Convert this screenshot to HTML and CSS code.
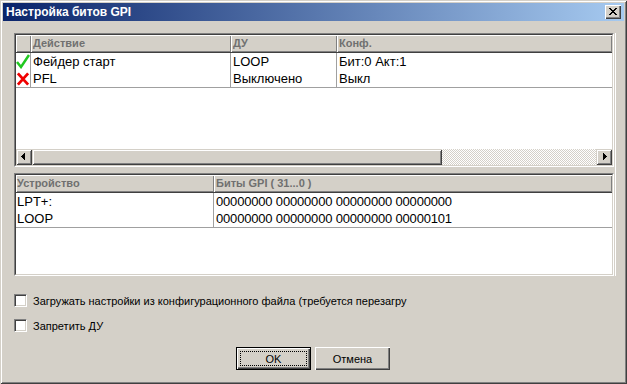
FILE: index.html
```html
<!DOCTYPE html>
<html>
<head>
  <meta charset="utf-8">
  <link rel="stylesheet" href="styles.css">
</head>
<body>
  <div class="window">
    <div class="titlebar">
      <span class="title">Настройка битов GPI</span>
      <button class="close" title="Закрыть">
        <svg viewBox="0 0 8 7" width="8" height="7">
          <path d="M0 0h2v1H0zM6 0h2v1H6zM1 1h2v1H1zM5 1h2v1H5zM2 2h4v1H2zM3 3h2v1H3zM2 4h4v1H2zM1 5h2v1H1zM5 5h2v1H5zM0 6h2v1H0zM6 6h2v1H6z"/>
        </svg>
      </button>
    </div>

    <div class="content">
      <div class="panel">
        <div class="list list-actions">
          <div class="list-in">
            <div class="grid cols-actions head">
              <div class="hc"></div>
              <div class="hc">Действие</div>
              <div class="hc">ДУ</div>
              <div class="hc">Конф.</div>
            </div>
            <div class="rows">
              <div class="grid cols-actions row">
                <div class="cell icon">
                  <svg viewBox="0 0 14 15" width="14" height="15">
                    <polyline points="1,8 5,13 13,1" class="ok-mark"/>
                  </svg>
                </div>
                <div class="cell">Фейдер старт</div>
                <div class="cell">LOOP</div>
                <div class="cell">Бит:0 Акт:1</div>
              </div>
              <div class="grid cols-actions row">
                <div class="cell icon">
                  <svg viewBox="0 0 15 16" width="15" height="16">
                    <path d="M2,2 L13,14 M13,2 L2,14" class="no-mark"/>
                  </svg>
                </div>
                <div class="cell">PFL</div>
                <div class="cell">Выключено</div>
                <div class="cell">Выкл</div>
              </div>
            </div>
            <div class="spacer"></div>
            <div class="hscroll">
              <div class="sb-btn">
                <svg viewBox="0 0 16 16" width="16" height="16">
                  <path d="M5 7h1v1H5zM6 6h1v3H6zM7 5h1v5H7zM8 4h1v7H8z"/>
                </svg>
              </div>
              <div class="sb-thumb"></div>
              <div class="sb-track"></div>
              <div class="sb-btn">
                <svg viewBox="0 0 16 16" width="16" height="16">
                  <path d="M10 7h1v1h-1zM9 6h1v3H9zM8 5h1v5H8zM7 4h1v7H7z"/>
                </svg>
              </div>
            </div>
          </div>
        </div>

        <div class="list list-devices">
          <div class="list-in">
            <div class="grid cols-devices head">
              <div class="hc">Устройство</div>
              <div class="hc">Биты GPI ( 31...0 )</div>
            </div>
            <div class="rows">
              <div class="grid cols-devices row">
                <div class="cell">LPT+:</div>
                <div class="cell bits">00000000 00000000 00000000 00000000</div>
              </div>
              <div class="grid cols-devices row">
                <div class="cell">LOOP</div>
                <div class="cell bits">00000000 00000000 00000000 00000101</div>
              </div>
            </div>
          </div>
        </div>
      </div>

      <label class="check first">
        <span class="box"></span>
        <span class="label-text">Загружать настройки из конфигурационного файла (требуется перезагру</span>
      </label>
      <label class="check">
        <span class="box"></span>
        <span class="label-text">Запретить ДУ</span>
      </label>

      <div class="buttons">
        <button class="btn default"><span class="focus">OK</span></button>
        <button class="btn">Отмена</button>
      </div>
    </div>
  </div>
</body>
</html>
```

FILE: styles.css
```css
body {
  margin: 0;
  padding: 0;
  font-family: "Liberation Sans", Arial, sans-serif;
  color: #000;
  background: #d4d0c8;
}

.window {
  width: 627px;
  height: 384px;
  box-sizing: border-box;
  padding: 3px;
  background: #d4d0c8;
  box-shadow: inset 1px 1px #d4d0c8, inset -1px -1px #404040, inset 2px 2px #fff, inset -2px -2px #808080;
  display: flex;
  flex-direction: column;
}

.titlebar {
  height: 18px;
  display: flex;
  align-items: center;
  justify-content: space-between;
  padding: 0 3px 0 3px;
  background: linear-gradient(to right, #0a246a, #a6caf0);
}

.title {
  color: #fff;
  font-weight: bold;
  font-size: 12px;
}

.close {
  width: 16px;
  height: 14px;
  padding: 0;
  border: none;
  background: #d4d0c8;
  box-shadow: inset 1px 1px #fff, inset -1px -1px #404040, inset -2px -2px #808080;
  display: flex;
  align-items: center;
  justify-content: center;
}

.close svg {
  fill: #000;
  shape-rendering: crispEdges;
  margin-top: -1px;
}

.content {
  flex: 1;
  padding: 12px 8px 0 11px;
  display: flex;
  flex-direction: column;
}

.panel {
  width: 602px;
  box-sizing: border-box;
  padding-right: 1px;
  border-right: 1px solid #fff;
  display: flex;
  flex-direction: column;
  gap: 6px;
}

.list {
  border: 1px solid;
  border-color: #808080 #fff #fff #808080;
}

.list-in {
  height: 100%;
  box-sizing: border-box;
  border: 1px solid;
  border-color: #404040 #d4d0c8 #d4d0c8 #404040;
  background: #fff;
  display: flex;
  flex-direction: column;
}

.list-actions {
  height: 134px;
  box-sizing: border-box;
}

.list-devices {
  height: 103px;
  box-sizing: border-box;
}

.grid {
  display: grid;
}

.cols-actions {
  grid-template-columns: 15px 200px 106px 1fr;
}

.cols-devices {
  grid-template-columns: 198px 1fr;
}

.head {
  border-bottom: 1px solid #404040;
}

.hc {
  height: 17px;
  line-height: 17px;
  padding-left: 2px;
  background: #d4d0c8;
  box-shadow: inset 1px 1px #fff, inset -1px -1px #808080;
  font-size: 11px;
  font-weight: bold;
  color: #707070;
  white-space: nowrap;
  overflow: hidden;
}

.cols-devices .hc:first-child {
  padding-left: 1px;
}

.rows {
  border-bottom: 1px solid #a0a0a0;
}

.row {
  height: 17px;
}

.cell {
  font-size: 13px;
  line-height: 17px;
  padding-left: 2px;
  border-right: 1px solid #a0a0a0;
  white-space: nowrap;
  overflow: hidden;
}

.cell:last-child {
  border-right: none;
}

.cell.bits {
  letter-spacing: -0.18px;
}

.cols-devices .cell:first-child {
  padding-left: 1px;
}

.cell.icon {
  padding-left: 0;
  display: flex;
  align-items: center;
  overflow: visible;
}

.ok-mark {
  fill: none;
  stroke: #20c820;
  stroke-width: 2.5;
}

.no-mark {
  fill: none;
  stroke: #f00000;
  stroke-width: 3;
}

.spacer {
  flex: 1;
}

.hscroll {
  height: 16px;
  display: flex;
}

.sb-btn {
  width: 16px;
  height: 16px;
  background: #d4d0c8;
  box-shadow: inset 1px 1px #d4d0c8, inset -1px -1px #404040, inset 2px 2px #fff, inset -2px -2px #808080;
}

.sb-btn svg {
  display: block;
  fill: #000;
  shape-rendering: crispEdges;
}

.sb-thumb {
  width: 410px;
  background: #d4d0c8;
  box-shadow: inset 1px 1px #d4d0c8, inset -1px -1px #404040, inset 2px 2px #fff, inset -2px -2px #808080;
}

.sb-track {
  flex: 1;
  background: repeating-conic-gradient(#d4d0c8 0 25%, #fff 0 50%) 0 0 / 2px 2px;
}

.check {
  display: flex;
  align-items: center;
  gap: 6px;
  height: 13px;
  margin-top: 12px;
  font-size: 11px;
}

.check.first {
  margin-top: 18px;
}

.box {
  width: 13px;
  height: 13px;
  box-sizing: border-box;
  flex: none;
  background: #fff;
  border: 1px solid;
  border-color: #808080 #fff #fff #808080;
  box-shadow: inset 1px 1px #404040, inset -1px -1px #d4d0c8;
}

.label-text {
  white-space: nowrap;
}

.buttons {
  display: flex;
  justify-content: center;
  gap: 4px;
  margin-top: 15px;
  padding-right: 4px;
}

.btn {
  width: 75px;
  height: 23px;
  padding: 0;
  border: none;
  background: #d4d0c8;
  box-shadow: inset 1px 1px #fff, inset -1px -1px #404040, inset -2px -2px #808080;
  font-family: "Liberation Sans", Arial, sans-serif;
  font-size: 11px;
  color: #000;
}

.btn.default {
  border: 1px solid #000;
  padding: 3px;
  display: flex;
}

.focus {
  flex: 1;
  border: 1px dotted #000;
  display: flex;
  align-items: center;
  justify-content: center;
}
```
